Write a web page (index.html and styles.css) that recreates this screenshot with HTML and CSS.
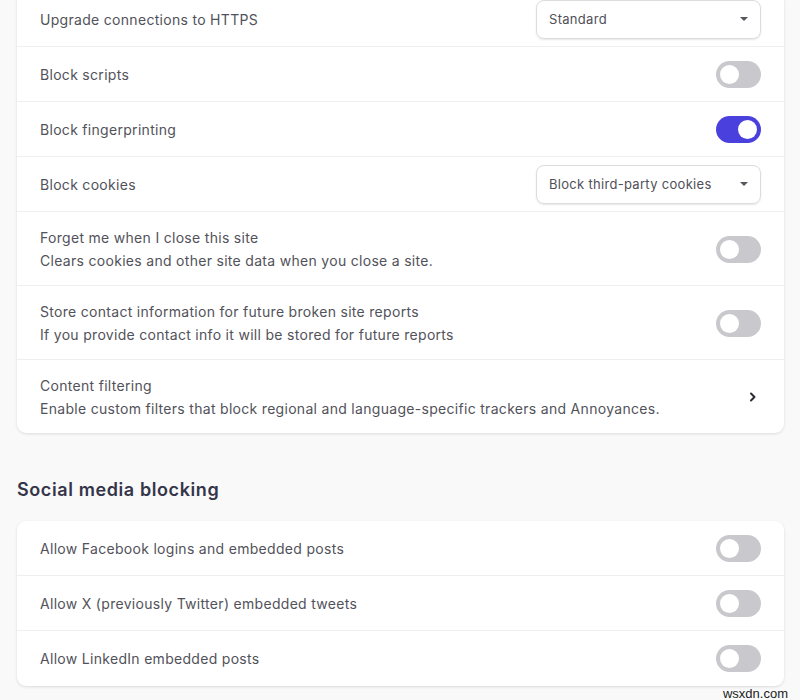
FILE: index.html
```html
<!DOCTYPE html>
<html lang="en">
<head>
    <meta charset="UTF-8">
    <meta name="viewport" content="width=device-width, initial-scale=1.0">
    <title>Privacy settings</title>
    <link rel="stylesheet" href="styles.css">
</head>
<body>
    <div class="page">
        <div class="card">
            <div class="row">
                <span class="label">Upgrade connections to HTTPS</span>
                <div class="select">Standard <span class="caret"></span></div>
            </div>
            <div class="row">
                <span class="label">Block scripts</span>
                <span class="toggle"></span>
            </div>
            <div class="row">
                <span class="label">Block fingerprinting</span>
                <span class="toggle on"></span>
            </div>
            <div class="row">
                <span class="label">Block cookies</span>
                <div class="select">Block third-party cookies <span class="caret"></span></div>
            </div>
            <div class="row double">
                <div class="text">
                    <span class="label">Forget me when I close this site</span>
                    <span class="desc">Clears cookies and other site data when you close a site.</span>
                </div>
                <span class="toggle"></span>
            </div>
            <div class="row double">
                <div class="text">
                    <span class="label">Store contact information for future broken site reports</span>
                    <span class="desc">If you provide contact info it will be stored for future reports</span>
                </div>
                <span class="toggle"></span>
            </div>
            <div class="row double">
                <div class="text">
                    <span class="label">Content filtering</span>
                    <span class="desc">Enable custom filters that block regional and language-specific trackers and Annoyances.</span>
                </div>
                <svg class="chevron" width="10" height="12" viewBox="0 0 10 12">
                    <path d="M3 2.5 L6.5 6 L3 9.5" fill="none" stroke="#2b2b33" stroke-width="2" stroke-linecap="round" stroke-linejoin="round"/>
                </svg>
            </div>
        </div>

        <h2>Social media blocking</h2>

        <div class="card">
            <div class="row">
                <span class="label">Allow Facebook logins and embedded posts</span>
                <span class="toggle"></span>
            </div>
            <div class="row">
                <span class="label">Allow X (previously Twitter) embedded tweets</span>
                <span class="toggle"></span>
            </div>
            <div class="row">
                <span class="label">Allow LinkedIn embedded posts</span>
                <span class="toggle"></span>
            </div>
        </div>
    </div>
    <span class="mark">wsxdn.com</span>
</body>
</html>
```

FILE: styles.css
```css
body {
    font-family: Inter, 'Noto Sans', sans-serif;
    background-color: #f9f9f9;
    color: #52525a;
    margin: 0;
    height: 700px;
    overflow: hidden;
    position: relative;
}
.page {
    margin-top: -8px;
    padding: 0 16px 0 17px;
}
.card {
    background: white;
    border-radius: 9px;
    box-shadow: 0 1px 3px rgba(0, 0, 0, 0.12);
}
.row {
    display: flex;
    align-items: center;
    justify-content: space-between;
    box-sizing: border-box;
    min-height: 55px;
    padding: 13px 23px;
    border-bottom: 1px solid #efeff1;
    font-size: 14px;
    line-height: 23px;
    letter-spacing: 0.3px;
}
.row.double {
    padding-top: 14px;
}
.row:last-child {
    border-bottom: none;
}
.text {
    display: flex;
    flex-direction: column;
}
.select {
    box-sizing: border-box;
    width: 225px;
    height: 39px;
    margin: -8px 0;
    padding: 0 12px;
    display: flex;
    align-items: center;
    justify-content: space-between;
    border: 1px solid #dcdce0;
    border-radius: 8px;
    box-shadow: 0 1px 2px rgba(0, 0, 0, 0.1);
    color: #505058;
    font-size: 13px;
}
.caret {
    width: 0;
    height: 0;
    border-left: 4px solid transparent;
    border-right: 4px solid transparent;
    border-top: 4px solid #55555c;
}
.toggle {
    position: relative;
    flex: none;
    width: 45px;
    height: 27px;
    border-radius: 14px;
    background: #c9c9cd;
}
.toggle::after {
    content: "";
    position: absolute;
    top: 4px;
    left: 4px;
    width: 19px;
    height: 19px;
    border-radius: 50%;
    background: white;
}
.toggle.on {
    background: #4a40dd;
}
.toggle.on::after {
    left: 22px;
}
.chevron {
    margin-right: 3px;
}
h2 {
    font-size: 18px;
    font-weight: 600;
    letter-spacing: 0.6px;
    color: #35354a;
    line-height: 24px;
    margin: 45px 0 19px 0;
}
.mark {
    position: absolute;
    right: 12px;
    bottom: -1px;
    font-family: 'Liberation Sans', sans-serif;
    font-size: 13px;
    color: #222;
}
```
